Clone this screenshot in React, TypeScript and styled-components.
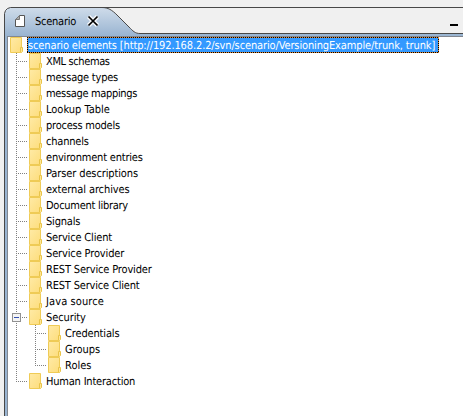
import React from "react";
import styled, { createGlobalStyle } from "styled-components";

const GlobalStyle = createGlobalStyle`
  * { box-sizing: border-box; }
  html, body { margin: 0; padding: 0; background: #f0f0f0; overflow: hidden; }
`;

const Window = styled.div`
  width: 463px;
  height: 416px;
  padding: 7px 0 0 4px;
  background: #f0f0f0;
  font-family: "DejaVu Sans Condensed", "DejaVu Sans", sans-serif;
  font-stretch: condensed;
  font-size: 11px;
  color: #000;
  overflow: hidden;
  text-rendering: geometricPrecision;
`;

const Header = styled.div`
  position: relative;
  display: flex;
  align-items: center;
  height: 29px;
  padding: 0 5px 1px 11px;
`;

const TabShape = styled.svg`
  position: absolute;
  inset: 0;
`;

const Title = styled.span<{ $spacing: number }>`
  position: relative;
  margin-left: 9px;
  width: 51px;
  white-space: nowrap;
  line-height: 16px;
  padding-top: 1px;
  letter-spacing: ${(p) => p.$spacing}px;
`;

const Glyph = styled.svg`
  position: relative;
  flex: none;
  display: block;
`;

const MinimizeButton = styled.button`
  position: relative;
  margin-left: auto;
  margin-top: 8px;
  width: 8px;
  height: 2px;
  padding: 0;
  border: 0;
  background: #000;
`;

const Body = styled.div`
  height: 380px;
  border-left: 1px solid #484848;
  background: #99b4d1;
  padding-left: 2px;
`;

const Tree = styled.div`
  height: 100%;
  background: #fff;
  border-left: 1px solid #828790;
  border-top: 1px solid #828790;
  padding-left: 1px;
`;

const Row = styled.div`
  display: flex;
  height: 16px;
  align-items: center;
`;

const FolderIcon = styled.svg`
  flex: none;
  display: block;
  width: 14px;
  height: 16px;
`;

const Guides = styled.svg`
  flex: none;
  display: block;
  height: 16px;
`;

const Label = styled.span<{ $spacing: number }>`
  margin-left: 4px;
  line-height: 17px;
  height: 16px;
  white-space: nowrap;
  letter-spacing: ${(p) => p.$spacing}px;
`;

const SelectedLabel = styled(Label)`
  width: 412px;
  padding-left: 1px;
  background:
    repeating-linear-gradient(90deg, #000 0 1px, #e08a38 1px 2px) 0 0 / 100% 1px no-repeat,
    repeating-linear-gradient(90deg, #000 0 1px, #e08a38 1px 2px) 0 100% / 100% 1px no-repeat,
    repeating-linear-gradient(#000 0 1px, #e08a38 1px 2px) 0 0 / 1px 100% no-repeat,
    repeating-linear-gradient(#000 0 1px, #e08a38 1px 2px) 100% 0 / 1px 100% no-repeat,
    #3399ff;
  color: #fff;
`;

type Item = { label: string; spacing?: number; level?: 1 | 2; open?: boolean; last?: boolean };

const items: Item[] = [
  { label: "XML schemas", spacing: -0.38 },
  { label: "message types", spacing: -0.22 },
  { label: "message mappings", spacing: -0.33 },
  { label: "Lookup Table" },
  { label: "process models", spacing: -0.23 },
  { label: "channels", spacing: -0.2 },
  { label: "environment entries", spacing: -0.2 },
  { label: "Parser descriptions", spacing: -0.12 },
  { label: "external archives", spacing: -0.1 },
  { label: "Document library", spacing: -0.27 },
  { label: "Signals", spacing: -0.2 },
  { label: "Service Client", spacing: -0.17 },
  { label: "Service Provider", spacing: -0.14 },
  { label: "REST Service Provider", spacing: -0.16 },
  { label: "REST Service Client", spacing: -0.18 },
  { label: "Java source", spacing: 0.1 },
  { label: "Security", spacing: -0.1, open: true },
  { label: "Credentials", spacing: -0.15, level: 2 },
  { label: "Groups", level: 2 },
  { label: "Roles", level: 2, last: true },
  { label: "Human Interaction", spacing: -0.2, last: true },
];

const Folder = () => (
  <FolderIcon viewBox="0 0 14 16">
    <defs>
      <linearGradient id="folderFill" x1="0" y1="0" x2="1" y2="1">
        <stop offset="0" stopColor="#ffeaa6" />
        <stop offset="1" stopColor="#fddd7c" />
      </linearGradient>
    </defs>
    <path d="M1.5 .5H12.5V15.5H1.5Z" fill="url(#folderFill)" stroke="#efcb56" />
    <path d="M11.5 15V10.5H13.5V14.5L12.5 15.5" fill="#ffe694" stroke="#e9c44a" />
  </FolderIcon>
);

/* Dotted connector lines, 19px per tree level */
const GuideLines = ({ level = 1, open, last }: Item) => {
  const width = level === 2 ? 38 : 19;
  const x = level === 2 ? 26.5 : 7.5;
  return (
    <Guides width={width} viewBox={`0 0 ${width} 16`} shapeRendering="crispEdges">
      <g stroke="#808080" strokeDasharray="1 1" fill="none">
        {level === 2 && <path d="M7.5 0V16" />}
        <path d={`M${x} 0V${last ? 9 : 16}`} />
        <path d={`M${x + 1.5} 8.5H${x + 11}`} />
      </g>
      {open && (
        <>
          <rect x="3.5" y="4.5" width="8" height="8" rx="1" fill="#f4f4f4" stroke="#919191" />
          <path d="M5 8.5H10" stroke="#3450b0" />
        </>
      )}
    </Guides>
  );
};

export default function App() {
  return (
    <>
      <GlobalStyle />
      <Window>
        <Header>
          <TabShape width="459" height="29" viewBox="0 0 459 29">
            <defs>
              <linearGradient id="tabFill" x1="0" y1="0" x2="0" y2="1">
                <stop offset="0" stopColor="#cfdcea" />
                <stop offset="1" stopColor="#99b4d1" />
              </linearGradient>
            </defs>
            <path
              d="M.5 29V6.500L1.500 3.500L3.500 1.500L6.500 .5H98C104 .5 108 3 113 8L125 20C129 24 131 26.500 136 26.500H459V29Z"
              fill="url(#tabFill)"
            />
            <path
              d="M.5 29V6.500L1.500 3.500L3.500 1.500L6.500 .5H459M98 .5C104 .5 108 3 113 8L125 20C129 24 131 26.500 136 26.500H459"
              fill="none"
              stroke="#484848"
            />
          </TabShape>
          <Glyph width="11" height="14" viewBox="0 0 11 14">
            <path d="M4.500 1.500H9.500V12.500H.5V5.500Z" fill="#fff" stroke="#555" />
            <path d="M4.500 1.500V5.500H.5Z" fill="#aaa" stroke="#777" />
          </Glyph>
          <Title $spacing={-0.25}>Scenario</Title>
          <Glyph width="14" height="14" viewBox="0 0 14 14">
            <path d="M2.500 2.500L11.500 11.500M11.500 2.500L2.500 11.500" stroke="#f4f6f9" strokeWidth="4.500" />
            <path d="M2.500 2.500L11.500 11.500M11.500 2.500L2.500 11.500" stroke="#000" strokeWidth="1.700" />
          </Glyph>
          <MinimizeButton aria-label="Minimize" />
        </Header>
        <Body>
          <Tree>
            <Row>
              <Folder />
              <SelectedLabel $spacing={-0.13}>
                scenario elements [http://192.168.2.2/svn/scenario/VersioningExample/trunk, trunk]
              </SelectedLabel>
            </Row>
            {items.map((item) => (
              <Row key={item.label}>
                <GuideLines {...item} />
                <Folder />
                <Label $spacing={item.spacing ?? 0}>{item.label}</Label>
              </Row>
            ))}
          </Tree>
        </Body>
      </Window>
    </>
  );
}
